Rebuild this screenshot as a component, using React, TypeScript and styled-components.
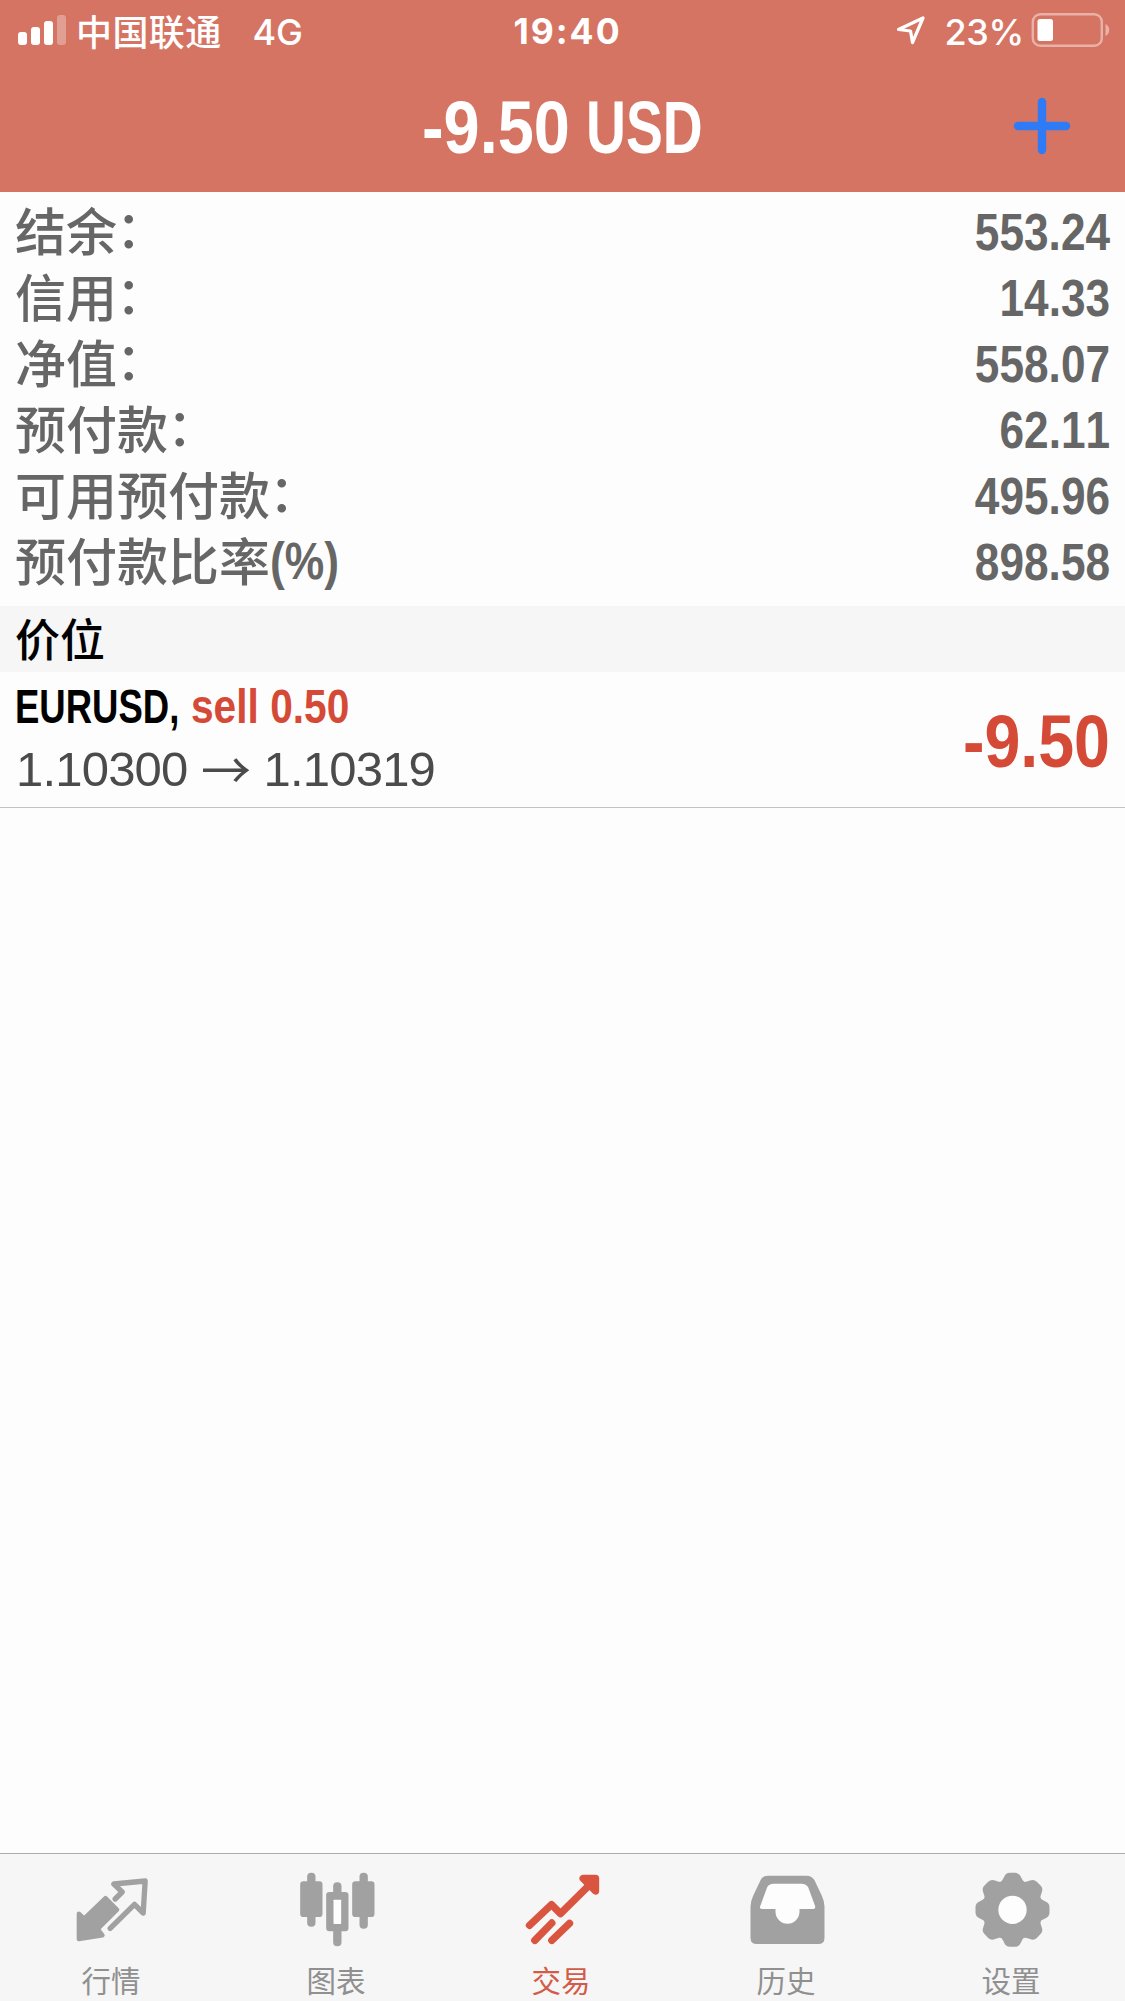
import React from "react";
import styled, { createGlobalStyle } from "styled-components";

const RED = "#d54a37";
const GREY = "#a1a1a1";
const SANS = `"Liberation Sans", "Noto Sans CJK SC", sans-serif`;
const CJK = `"Noto Sans CJK SC", sans-serif`;
const STATUS = `Inter, "Noto Sans CJK SC", sans-serif`;

const GlobalStyle = createGlobalStyle`
  * { box-sizing: border-box; }
  body { margin: 0; background: #fdfdfd; }
`;

const Screen = styled.main`
  display: flex;
  flex-direction: column;
  width: 1125px;
  height: 2001px;
  overflow: hidden;
  background: #fdfdfd;
  font-family: ${SANS};
  font-kerning: none;
`;

const Header = styled.header`
  height: 192px;
  flex: none;
  background: #d57463;
  color: #fff;
`;

const StatusBar = styled.div`
  display: grid;
  grid-template-columns: 1fr auto 1fr;
  grid-template-rows: 60px;
  height: 60px;
  padding: 0 15px 0 18px;
  align-items: center;
  font: 500 36px/56px ${STATUS};
`;

const StatusLeft = styled.div`
  display: flex;
  align-items: center;
`;

const StatusRight = styled.div`
  display: flex;
  align-items: center;
  justify-content: flex-end;
`;

const Carrier = styled.span`
  margin: 0 31px 0 9px;
  font: 500 36px/60px ${CJK};
  letter-spacing: 0.4px;
`;

const StatusText = styled.span`
  padding-top: 3px;
  letter-spacing: -0.3px;
`;

const Clock = styled.span`
  padding: 4px 0 0 7px;
  font-weight: 700;
  font-size: 35.5px;
  letter-spacing: 2px;
`;

const BatteryLevel = styled(StatusText)`
  margin: 0 7px 0 18px;
`;

const NavBar = styled.div`
  display: grid;
  grid-template-columns: 1fr auto 1fr;
  grid-template-rows: 132px;
  height: 132px;
  align-items: center;
  padding-right: 50px;
  padding-left: 50px;
`;

const Title = styled.h1`
  grid-column: 2;
  display: flex;
  gap: 18px;
  margin: 0;
  padding-top: 3px;
  font-size: 75px;
  line-height: 129px;
`;

const AddButton = styled.button`
  justify-self: end;
  display: flex;
  padding: 0;
  border: 0;
  background: none;
`;

/* Condensed run of text: the box keeps $w, the glyphs are narrowed by $x. */
const CondensedBox = styled.span<{ $w: number; $x: number; $end?: boolean }>`
  display: inline-flex;
  justify-content: ${(p) => (p.$end ? "flex-end" : "flex-start")};
  width: ${(p) => p.$w}px;
  font-weight: 700;
  white-space: nowrap;
  > span {
    flex: none;
    transform: scaleX(${(p) => p.$x});
    transform-origin: ${(p) => (p.$end ? "right" : "left")} center;
  }
`;

type CondensedProps = { w: number; x: number; end?: boolean; children: React.ReactNode };
const Condensed = ({ w, x, end, children }: CondensedProps) => (
  <CondensedBox $w={w} $x={x} $end={end}>
    <span>{children}</span>
  </CondensedBox>
);

const Summary = styled.section`
  height: 414px;
  flex: none;
  padding: 6px 15px 12px;
  color: #666;
`;

const SummaryRow = styled.div`
  display: flex;
  justify-content: space-between;
  height: 66px;
`;

const Label = styled.span`
  display: flex;
  font: 500 51px/62px ${CJK};
`;

const Colon = styled.span`
  margin-left: -1px;
  line-height: 56px;
`;

const Unit = styled.span`
  font: 700 51px/67px ${SANS};
`;

const Value = styled.span`
  font-size: 52px;
  line-height: 68px;
`;

const SectionTitle = styled.h2`
  height: 66px;
  flex: none;
  margin: 0;
  padding: 0 15px;
  background: #f6f6f6;
  color: #000;
  font: 500 45px/64px ${CJK};
`;

const Position = styled.article`
  display: flex;
  flex: none;
  justify-content: space-between;
  height: 136px;
  padding: 0 15px;
  border-bottom: 1px solid #c2c2c2;
`;

const PositionInfo = styled.div`
  display: flex;
  flex-direction: column;
  padding-top: 2px;
`;

const Order = styled.div`
  display: flex;
  height: 64px;
  font-size: 49px;
  line-height: 64px;
`;

const Side = styled.span`
  margin-left: 13px;
  color: ${RED};
`;

const Prices = styled.div`
  display: flex;
  align-items: center;
  height: 62px;
  padding-left: 1px;
  color: #4b4b4b;
  font-size: 49px;
  line-height: 62px;
  letter-spacing: -0.8px;
`;

const PriceArrow = styled.span`
  width: 76px;
  text-align: center;
  font: 400 50px/58px ${CJK};
  height: 62px;
`;

const Profit = styled.div`
  color: ${RED};
  font-size: 75px;
  line-height: 138px;
`;

const TabBar = styled.nav`
  display: grid;
  grid-template-columns: repeat(5, 1fr);
  flex: none;
  height: 148px;
  margin-top: auto;
  border-top: 1px solid #acacac;
  background: #f6f6f6;
`;

const Tab = styled.a<{ $active?: boolean }>`
  display: flex;
  flex-direction: column;
  align-items: center;
  padding-top: 11px;
  color: ${(p) => (p.$active ? "#d9553f" : GREY)};
`;

const TabLabel = styled.span<{ $active?: boolean }>`
  padding-right: 3px;
  color: ${(p) => (p.$active ? "#d25c49" : "#909090")};
  font: 400 29.5px/48px ${CJK};
`;

const SignalIcon = () => (
  <svg width="49" height="30" viewBox="0 0 49 30" fill="#fff">
    <rect x="0" y="17" width="9" height="13" rx="3" />
    <rect x="13" y="12" width="9" height="18" rx="3" />
    <rect x="26" y="6" width="9" height="24" rx="3" />
    <rect x="39" y="0" width="9" height="30" rx="3" opacity=".3" />
  </svg>
);

const LocationIcon = () => (
  <svg width="30" height="30" viewBox="0 0 30 30" fill="none" stroke="#fff" strokeWidth="3.2" strokeLinejoin="round">
    <path d="M2.5 14.5 27 3 16.5 27.5 14.5 16Z" />
  </svg>
);

const BatteryIcon = () => (
  <svg width="79" height="34" viewBox="0 0 79 34" display="block">
    <rect x="1.8" y="1.3" width="69" height="31.4" rx="7.5" fill="none" stroke="#fff" strokeWidth="2.4" opacity=".45" />
    <rect x="6.5" y="6" width="15.5" height="22" rx="2.5" fill="#fff" />
    <path d="M74.5 11c5 2 5 10 0 12Z" fill="#fff" opacity=".45" />
  </svg>
);

const PlusIcon = () => (
  <svg width="66" height="66" viewBox="0 0 66 66" stroke="#2f7bf5" strokeWidth="8.4" strokeLinecap="round">
    <path d="M33 9v48M9 33h48" />
  </svg>
);

const QuotesIcon = () => (
  <svg width="90" height="90" viewBox="202.5 75 270 270" fill="none" stroke="currentColor" strokeLinejoin="round" strokeLinecap="round">
    <path d="M235 221 251 236 315 174 350 209 292 267 306 286 235 297Z" fill="currentColor" strokeWidth="13" />
    <path d="M344 177 365 156 340 132 434 123 428 219 402 193 329 265" strokeWidth="16" />
  </svg>
);

const ChartIcon = () => (
  <svg width="90" height="90" viewBox="187.5 75 270 270" fill="currentColor">
    <rect x="230" y="98" width="25" height="162" rx="12" />
    <rect x="209" y="124" width="67" height="107" rx="10" />
    <rect x="387" y="98" width="25" height="168" rx="12" />
    <rect x="365" y="124" width="67" height="107" rx="10" />
    <rect x="308" y="127" width="25" height="192" rx="12" />
    <rect x="287" y="156" width="67" height="118" rx="10" />
    <rect x="309" y="179" width="23" height="73" rx="2" fill="#fdfdfd" />
  </svg>
);

const TradeIcon = () => (
  <svg width="90" height="90" viewBox="202.5 75 270 270" fill="none" stroke="currentColor" strokeLinecap="round" strokeLinejoin="round">
    <path d="M237 256 303 194 330 221 430 122" strokeWidth="22" />
    <path d="M398 115H435V153Z" fill="currentColor" strokeWidth="22" />
    <path d="M253 301 304 249M304 301 357 250" strokeWidth="22" />
  </svg>
);

const HistoryIcon = () => (
  <svg width="90" height="90" viewBox="187.5 75 270 270">
    <path
      d="M262 107H378Q395 107 402 121L424 167Q432 184 432 200V293Q432 312 413 312H229Q210 312 210 293V200Q210 184 218 167L240 121Q246 107 262 107Z"
      fill="currentColor"
    />
    <path
      d="M280 131H363Q377 131 383 142L404 199Q406 207 398 207H357V215A36 36 0 0 1 285 215V207H244Q236 207 239 199L260 142Q265 131 280 131Z"
      fill="#fdfdfd"
    />
  </svg>
);

const SettingsIcon = () => (
  <svg width="90" height="90" viewBox="202.5 75 270 270">
    <g transform="translate(336 209.5)">
      <g fill="currentColor">
        <circle r="91" />
        {[0, 45, 90, 135, 180, 225, 270, 315].map((angle) => (
          <path
            key={angle}
            d="M-39-81C-31-85-29-91-25-99Q-20-111-8-111H8Q20-111 25-99C29-91 31-85 39-81L0-50Z"
            transform={`rotate(${angle})`}
          />
        ))}
      </g>
      <circle r="42.5" fill="#fdfdfd" />
    </g>
  </svg>
);

const summary = [
  { label: "结余", value: "553.24" },
  { label: "信用", value: "14.33" },
  { label: "净值", value: "558.07" },
  { label: "预付款", value: "62.11" },
  { label: "可用预付款", value: "495.96" },
  { label: "预付款比率", unit: "(%)", value: "898.58" },
];

const tabs = [
  { label: "行情", Icon: QuotesIcon },
  { label: "图表", Icon: ChartIcon },
  { label: "交易", Icon: TradeIcon, active: true },
  { label: "历史", Icon: HistoryIcon },
  { label: "设置", Icon: SettingsIcon },
];

export default function App() {
  return (
    <Screen>
      <GlobalStyle />
      <Header>
        <StatusBar>
          <StatusLeft>
            <SignalIcon />
            <Carrier>中国联通</Carrier>
            <StatusText>4G</StatusText>
          </StatusLeft>
          <Clock>19:40</Clock>
          <StatusRight>
            <LocationIcon />
            <BatteryLevel>23%</BatteryLevel>
            <BatteryIcon />
          </StatusRight>
        </StatusBar>
        <NavBar>
          <Title>
            <Condensed w={146} x={0.865}>-9.50</Condensed>
            <Condensed w={118} x={0.737}>USD</Condensed>
          </Title>
          <AddButton aria-label="+">
            <PlusIcon />
          </AddButton>
        </NavBar>
      </Header>

      <Summary>
        {summary.map((row) => (
          <SummaryRow key={row.label}>
            <Label>
              {row.label}
              {row.unit ? (
                <Unit>
                  <Condensed w={68} x={0.87}>{row.unit}</Condensed>
                </Unit>
              ) : (
                <Colon>：</Colon>
              )}
            </Label>
            <Value>
              <Condensed w={136} x={0.85} end>{row.value}</Condensed>
            </Value>
          </SummaryRow>
        ))}
      </Summary>

      <SectionTitle>价位</SectionTitle>
      <Position>
        <PositionInfo>
          <Order>
            <Condensed w={163} x={0.745}>EURUSD,</Condensed>
            <Side>
              <Condensed w={160} x={0.83}>sell 0.50</Condensed>
            </Side>
          </Order>
          <Prices>
            <span>1.10300</span>
            <PriceArrow>→</PriceArrow>
            <span>1.10319</span>
          </Prices>
        </PositionInfo>
        <Profit>
          <Condensed w={150} x={0.86} end>-9.50</Condensed>
        </Profit>
      </Position>

      <TabBar>
        {tabs.map(({ label, Icon, active }) => (
          <Tab key={label} $active={active}>
            <Icon />
            <TabLabel $active={active}>{label}</TabLabel>
          </Tab>
        ))}
      </TabBar>
    </Screen>
  );
}
